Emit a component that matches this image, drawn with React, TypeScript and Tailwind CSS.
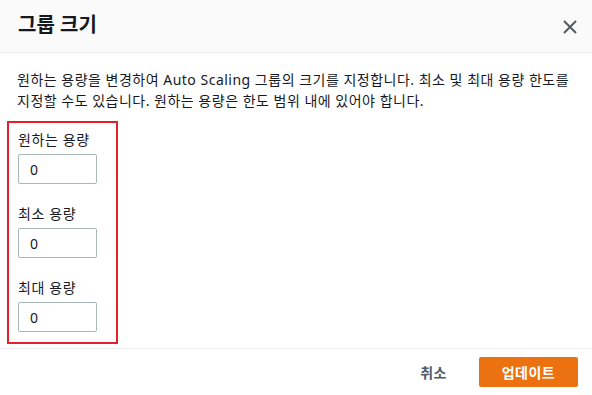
import React from "react";

function Field({ label, mt }: { label: string; mt: string }) {
  return (
    <div className={mt}>
      <div className="text-[14px] leading-[21px] text-[#16191f] tracking-[0.6px]">{label}</div>
      <div className="mt-[4px] w-[79px] h-[30px] border border-[#aab7b8] rounded-[2px] flex items-center pl-[11px] text-[14px] text-[#16191f]">
        0
      </div>
    </div>
  );
}

export default function App() {
  return (
    <div
      className="w-[592px] h-[395px] bg-white flex flex-col overflow-hidden"
      style={{ fontFamily: '"Noto Sans", "Noto Sans CJK KR", sans-serif' }}
    >
      <div className="h-[53px] bg-[#fafafa] border-b border-[#eaeded] flex items-center justify-between pl-[18px] pr-[14px] shrink-0">
        <div className="text-[20px] font-bold text-[#16191f] leading-[24px] pb-[3px]">그룹 크기</div>
        <svg width="16" height="16" viewBox="0 0 16 16" className="mt-[1px]">
          <path d="M2 2 L14 14 M14 2 L2 14" stroke="#545b64" strokeWidth="2" fill="none" />
        </svg>
      </div>
      <div className="pl-[17px] pr-[14px] pt-[16px] flex-1">
        <p className="text-[14px] leading-[21px] text-[#16191f] break-keep tracking-[0.5px]">
          원하는 용량을 변경하여 Auto Scaling 그룹의 크기를 지정합니다. 최소 및 최대 용량 한도를 지정할 수도 있습니다. 원하는 용량은 한도 범위 내에 있어야 합니다.
        </p>
        <div className="mt-[10px] -ml-[10px] w-[111px] border-2 border-[#e3202b] pl-[9px] pt-[6px] pb-[10px]">
          <Field label="원하는 용량" mt="" />
          <Field label="최소 용량" mt="mt-[19px]" />
          <Field label="최대 용량" mt="mt-[19px]" />
        </div>
      </div>
      <div className="h-[47px] border-t border-[#eaeded] flex items-center justify-end pr-[14px] shrink-0">
        <button className="text-[14px] font-bold text-[#545b64] mr-[32px] tracking-[0.5px]">취소</button>
        <button className="w-[99px] h-[30px] bg-[#ec7211] rounded-[2px] text-[14px] font-bold text-white tracking-[0.5px]">
          업데이트
        </button>
      </div>
    </div>
  );
}
